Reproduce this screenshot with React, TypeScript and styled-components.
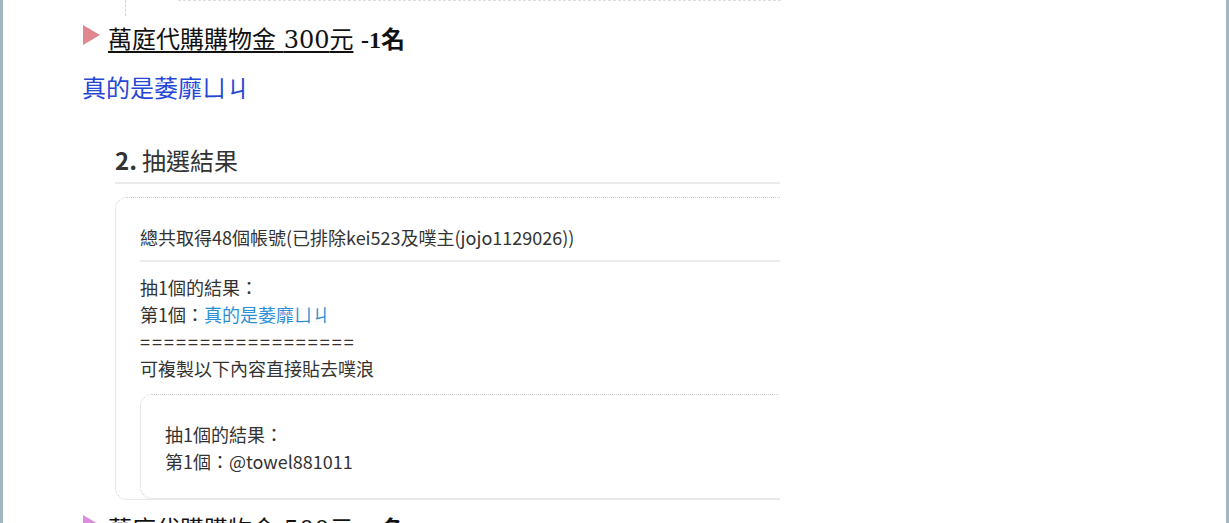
import React, {FC} from 'react';
import styled, {createGlobalStyle} from 'styled-components';

const GlobalStyle = createGlobalStyle`
  html, body {
    margin: 0;
    padding: 0;
    background: #fff;
  }
  body {
    font-family: "Liberation Serif", "Noto Sans CJK TC", serif;
  }
`

const Frame = styled.div`
  box-sizing: border-box;
  width: 1229px;
  height: 523px;
  overflow: hidden;
  background: #fff;
  border-left: 3px solid #a3b7c3;
  border-right: 3px solid #a3b7c3;
`

const Post = styled.div`
  padding-left: 79px;
`

// bottom edge of the previous screenshot, cut off by the top of the view
const ShotTail = styled.div`
  margin-left: 43px;
  width: 655px;
  height: 16px;
  border-left: 1px dashed #d6d6d6;
`

const ShotTailEdge = styled.div`
  margin-left: 52px;
  border-top: 1px dashed #dedede;
`

const PrizeRow = styled.div<{ $top: number }>`
  display: flex;
  align-items: flex-start;
  gap: 8px;
  height: 32px;
  margin: ${p => p.$top}px 0 0 1px;
  font-family: "DejaVu Serif", "Noto Sans CJK TC", serif;
  font-size: 24px;
  line-height: 32px;
  color: #111;
  white-space: nowrap;
`

const Bullet = styled.svg`
  flex: none;
  margin-top: 1px;
`

const PrizeLink = styled.a`
  color: #111;
  text-decoration: underline;
  text-underline-offset: 3px;
`

const PrizeCount = styled.b`
  font-family: "Liberation Serif", "Noto Sans CJK TC", serif;
  font-weight: bold;
`

const Winner = styled.div`
  margin-top: 17px;
  font-size: 24px;
  line-height: 32px;
  color: #2447d6;
`

const Shot = styled.div`
  margin: 30px 0 0 33px;
  width: 665px;
  height: 368px;
  overflow: hidden;
  font-family: "Noto Sans CJK TC", "Liberation Sans", sans-serif;
  color: #333;
`

const ShotHeading = styled.div`
  margin-top: 8px;
  font-size: 24px;
  line-height: 34px;
  white-space: nowrap;

  b {
    font-weight: 600;
    margin-right: 5px;
  }
`

const Rule = styled.div<{ $mt: number; $mb: number }>`
  height: 2px;
  background: #ebebeb;
  margin: ${p => p.$mt}px 0 ${p => p.$mb}px;
`

const Card = styled.div<{ $pad: string }>`
  width: 760px;
  box-sizing: border-box;
  border: 1px dotted #cfcfcf;
  border-radius: 12px;
  padding: ${p => p.$pad};
  font-size: 18px;
  line-height: 27px;
  white-space: nowrap;
`

const Line = styled.div``

const Separator = styled.div`
  letter-spacing: 2px;
`

const Blue = styled.span`
  color: #2b8fd6;
`

const InnerCard = styled(Card)`
  width: 700px;
  margin-top: 12px;
`

const Prize: FC<{ top: number; color: string; amount: string }> = ({top, color, amount}) => (
    <PrizeRow $top={top}>
        <Bullet width="17" height="20" viewBox="0 0 17 20">
            <polygon points="0,0 17,10 0,20" fill={color}/>
        </Bullet>
        <span>
            <PrizeLink>萬庭代購購物金 {amount}元</PrizeLink> <PrizeCount>-1名</PrizeCount>
        </span>
    </PrizeRow>
)

export default function App() {
    return (
        <>
            <GlobalStyle/>
            <Frame>
                <Post>
                    <ShotTail>
                        <ShotTailEdge/>
                    </ShotTail>

                    <Prize top={8} color="#e0878f" amount="300"/>
                    <Winner>真的是萎靡ㄩㄐ</Winner>

                    <Shot>
                        <ShotHeading><b>2.</b>抽選結果</ShotHeading>
                        <Rule $mt={5} $mb={13}/>
                        <Card $pad="26px 24px 0">
                            <Line>總共取得48個帳號(已排除kei523及噗主(jojo1129026))</Line>
                            <Rule $mt={9} $mb={12}/>
                            <Line>抽1個的結果：</Line>
                            <Line>第1個：<Blue>真的是萎靡ㄩㄐ</Blue></Line>
                            <Separator>==================</Separator>
                            <Line>可複製以下內容直接貼去噗浪</Line>
                            <InnerCard $pad="26px 24px 23px">
                                <Line>抽1個的結果：</Line>
                                <Line>第1個：@towel881011</Line>
                            </InnerCard>
                        </Card>
                    </Shot>

                    <Prize top={11} color="#db8edb" amount="500"/>
                </Post>
            </Frame>
        </>
    );
}
